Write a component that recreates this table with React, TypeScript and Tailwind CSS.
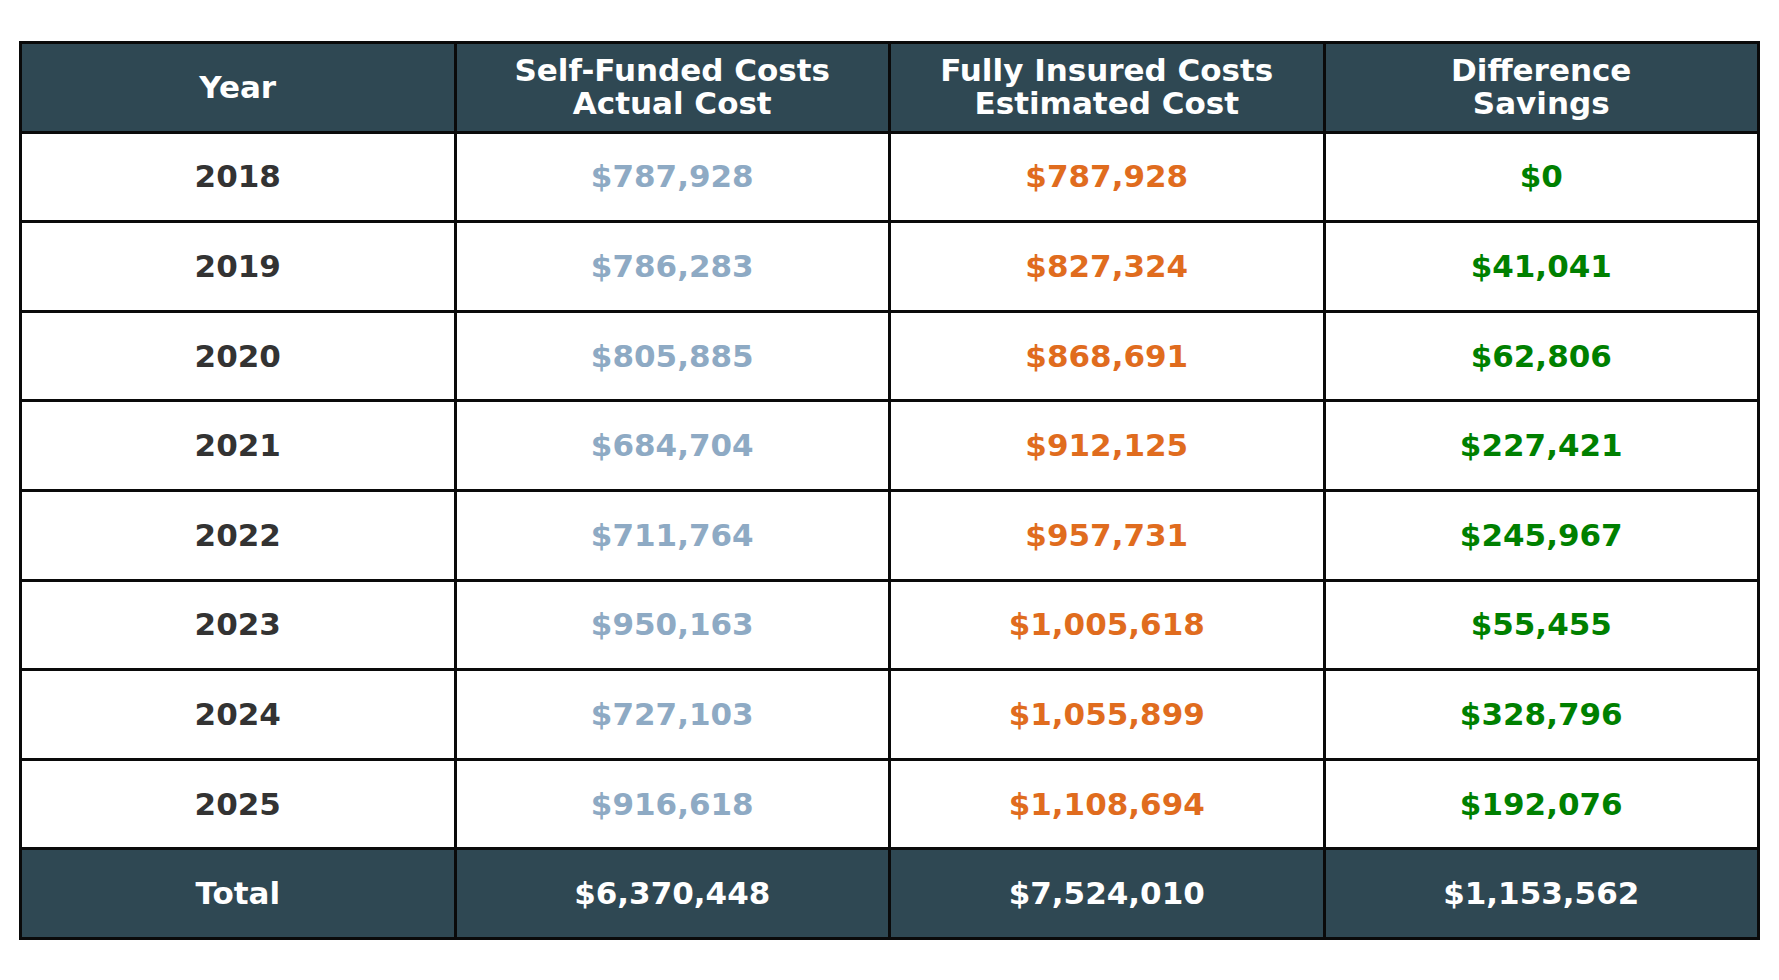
import React from "react";

const rows = [
  ["2018", "$787,928", "$787,928", "$0"],
  ["2019", "$786,283", "$827,324", "$41,041"],
  ["2020", "$805,885", "$868,691", "$62,806"],
  ["2021", "$684,704", "$912,125", "$227,421"],
  ["2022", "$711,764", "$957,731", "$245,967"],
  ["2023", "$950,163", "$1,005,618", "$55,455"],
  ["2024", "$727,103", "$1,055,899", "$328,796"],
  ["2025", "$916,618", "$1,108,694", "$192,076"],
];

export default function App() {
  return (
    <div
      className="w-[1779px] h-[980px] bg-white pt-[41px] pl-[19px]"
      style={{ fontFamily: '"DejaVu Sans", sans-serif' }}
    >
      <table className="w-[1741px] border-collapse table-fixed font-bold text-[31px] leading-[33px] text-center">
        <thead>
          <tr className="h-[89.6px] bg-[#2f4853] text-white">
            <th className="border-[3px] border-[#0a0a0a]">Year</th>
            <th className="border-[3px] border-[#0a0a0a]">
              Self-Funded Costs
              <br />
              Actual Cost
            </th>
            <th className="border-[3px] border-[#0a0a0a]">
              Fully Insured Costs
              <br />
              Estimated Cost
            </th>
            <th className="border-[3px] border-[#0a0a0a]">
              Difference
              <br />
              Savings
            </th>
          </tr>
        </thead>
        <tbody>
          {rows.map((r) => (
            <tr key={r[0]} className="h-[89.6px] bg-white">
              <td className="border-[3px] border-[#0a0a0a] text-[#333333]">{r[0]}</td>
              <td className="border-[3px] border-[#0a0a0a] text-[#8eaac4]">{r[1]}</td>
              <td className="border-[3px] border-[#0a0a0a] text-[#e06c1e]">{r[2]}</td>
              <td className="border-[3px] border-[#0a0a0a] text-[#008000]">{r[3]}</td>
            </tr>
          ))}
          <tr className="h-[89.6px] bg-[#2f4853] text-white">
            <td className="border-[3px] border-[#0a0a0a]">Total</td>
            <td className="border-[3px] border-[#0a0a0a]">$6,370,448</td>
            <td className="border-[3px] border-[#0a0a0a]">$7,524,010</td>
            <td className="border-[3px] border-[#0a0a0a]">$1,153,562</td>
          </tr>
        </tbody>
      </table>
    </div>
  );
}
